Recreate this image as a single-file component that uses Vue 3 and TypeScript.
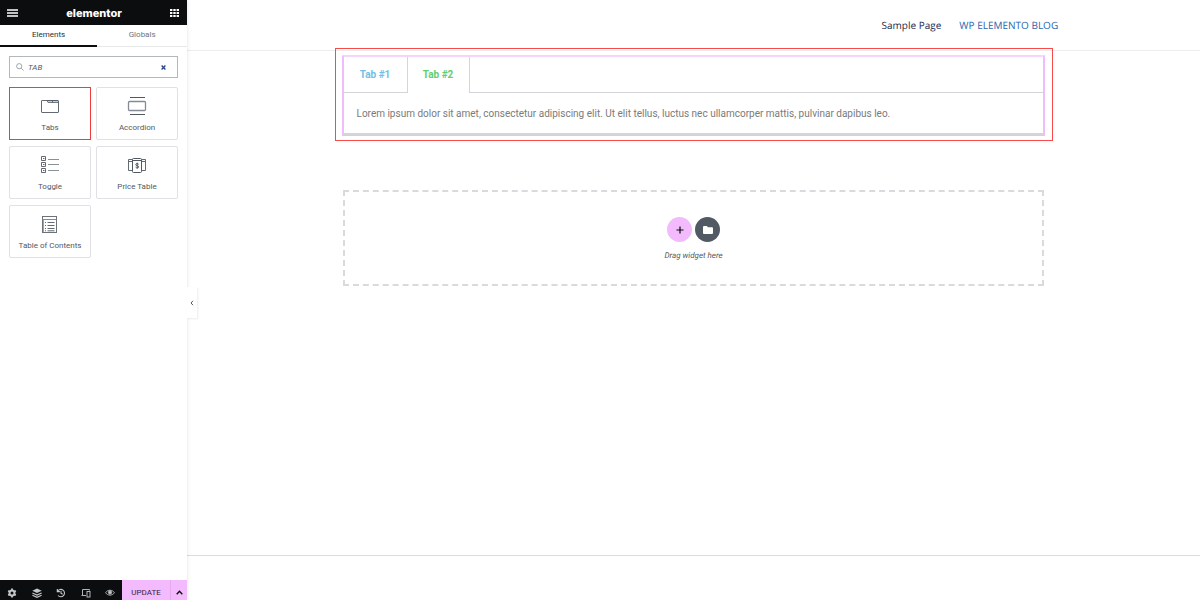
<script setup lang="ts">
import { ref } from 'vue'

interface Widget {
  name: string
  icon: string
  selected?: boolean
}

const query = ref('TAB')
const activeTab = ref(1)
const tabs = ['Tab #1', 'Tab #2']
const widgets: Widget[] = [
  { name: 'Tabs', icon: 'tabs', selected: true },
  { name: 'Accordion', icon: 'accordion' },
  { name: 'Toggle', icon: 'toggle' },
  { name: 'Price Table', icon: 'price' },
  { name: 'Table of Contents', icon: 'toc' },
]
</script>

<template>
  <div class="editor">
    <aside class="panel">
      <header class="panel-head">
        <button class="bare" aria-label="Menu">
          <svg width="11" height="8" viewBox="0 0 11 8"><path d="M0 1h11M0 4h11M0 7h11" stroke="#fff" stroke-width="1.5" /></svg>
        </button>
        <span class="brand">elementor</span>
        <button class="bare" aria-label="Widgets">
          <svg width="9" height="8" viewBox="0 0 9 8"><path d="M0 1h9M0 4h9M0 7h9" stroke="#fff" stroke-width="2" stroke-dasharray="2.4 .9" /></svg>
        </button>
      </header>
      <nav class="panel-tabs">
        <button class="panel-tab current">Elements</button>
        <button class="panel-tab">Globals</button>
      </nav>
      <div class="search">
        <svg width="8" height="8" viewBox="0 0 8 8" fill="none" stroke="#8a8f96" stroke-width=".8"><circle cx="3.2" cy="3.2" r="2.6" /><path d="M5.1 5.1 7.6 7.6" /></svg>
        <input v-model="query" class="search-input" type="text" aria-label="Search widget" />
        <button class="bare" aria-label="Clear search" @click="query = ''">
          <svg width="5" height="5" viewBox="0 0 5 5"><path d="M.6.6 4.4 4.4M4.4.6.6 4.4" stroke="#2a4788" stroke-width="1.4" /></svg>
        </button>
      </div>
      <div class="widgets">
        <button v-for="w in widgets" :key="w.name" class="widget" :class="{ selected: w.selected }">
          <svg class="widget-icon" width="20" height="20" viewBox="0 0 20 20" fill="none" stroke="#515962">
            <template v-if="w.icon === 'tabs'">
              <rect x="1.5" y="4.500" width="17" height="12" rx=".5" stroke-width=".9" />
              <path d="M7 4.500l1 2h10.500M12.500 4.500v2" stroke-width=".8" />
              <path d="M8 4.800h10" />
            </template>
            <template v-else-if="w.icon === 'accordion'">
              <path d="M3 1.500h15M3 18.500h15" />
              <rect x="1.500" y="5.500" width="17" height="9" rx="1" stroke="#858b94" stroke-width="1.300" />
            </template>
            <template v-else-if="w.icon === 'toggle'">
              <path d="M1.500 1.500h4v4h-4zM1.500 7.500h4v4h-4zM1.500 13.500h4v4h-4zM3 3.500h1.500M3 9.500h1.500M3 15.500h1.500" stroke-width=".9" />
              <path d="M8 4.500h11M8 9.500h11M8 15.500h11" stroke="#7c838b" stroke-width=".9" />
            </template>
            <template v-else-if="w.icon === 'price'">
              <path d="M5.500 4.500h-4v11h4M14.500 4.500h4v11h-4M2 6.500h3M15 6.500h3" stroke-width=".9" />
              <rect x="5.500" y="3.500" width="9" height="14" rx="1" />
              <path d="M6 5.500h8M11.700 9.300c-.5-1-3-1-3 .3 0 1.500 3 .8 3 2.300 0 1.300-2.500 1.300-3.100.2M10.200 7.700v6" stroke-width="1" />
            </template>
            <template v-else>
              <rect x="2.500" y="2.500" width="14" height="16" stroke="#6b727a" />
              <path d="M2.500 5.500h14" stroke="#858b94" />
              <path d="M3.500 6v12" stroke="#c49a78" />
              <path d="M7.500 8.500h7M7.500 11.500h7M7.500 14.500h7M5 8.500h1M5 11.500h1M5 14.500h1M5 16.800h1M7.500 16.800h7" stroke-width=".9" />
            </template>
          </svg>
          <span>{{ w.name }}</span>
        </button>
      </div>
      <footer class="panel-foot">
        <div class="tools">
          <button class="bare" aria-label="Settings">
            <svg width="10" height="10" viewBox="0 0 10 10"><circle cx="5" cy="5" r="2.500" fill="none" stroke="#c3c8cd" stroke-width="2" /><path d="M5 .6v1.800M5 7.600v1.800M1.200 2.800l1.500.9M7.300 6.300l1.500.9M1.200 7.200l1.500-.9M7.300 3.700l1.500-.9" stroke="#c3c8cd" stroke-width="1.800" /></svg>
          </button>
          <button class="bare" aria-label="Navigator">
            <svg width="10" height="10" viewBox="0 0 10 10"><path d="M5 .5 9.700 2.700 5 4.900.3 2.700z" fill="#c3c8cd" /><path d="M.4 5 5 7.100 9.600 5M.4 7.200 5 9.300 9.600 7.200" fill="none" stroke="#c3c8cd" stroke-width="1.100" /></svg>
          </button>
          <button class="bare" aria-label="History">
            <svg width="10" height="10" viewBox="0 0 10 10" fill="none" stroke="#c3c8cd" stroke-width="1.100"><path d="M1.600 3.200A3.700 3.700 0 1 1 2 7.500M1.300 1v2.600h2.600M5 3v2.300l1.600 1" /></svg>
          </button>
          <button class="bare" aria-label="Responsive mode">
            <svg width="10" height="10" viewBox="0 0 10 10" fill="none" stroke="#aeb4ba"><path d="M8.500 2.500v-1H1.500v6M.5 7.500H5" /><rect x="6" y="3.500" width="3" height="5.500" /></svg>
          </button>
          <button class="bare" aria-label="Preview">
            <svg width="10" height="10" viewBox="0 0 10 10" fill="none" stroke="#aeb4ba"><path d="M.6 4.700C2.600 1.400 7.400 1.400 9.400 4.700 7.400 7.900 2.600 7.900.6 4.700z" /><circle cx="5" cy="4.400" r="1.600" fill="#c3c8cd" /></svg>
          </button>
        </div>
        <button class="update">UPDATE</button>
        <button class="update-more" aria-label="Save options">
          <svg width="7" height="5" viewBox="0 0 7 5"><path d="M.7 4.200 3.500 1.200 6.300 4.200" fill="none" stroke="#0c0d0e" stroke-width="1.300" /></svg>
        </button>
      </footer>
      <button class="collapse" aria-label="Hide panel">
        <svg width="4" height="6" viewBox="0 0 4 6"><path d="M3 .8 1 3 3 5.200" fill="none" stroke="#515962" /></svg>
      </button>
    </aside>

    <main class="preview">
      <header class="site-head">
        <nav class="site-nav">
          <a href="#" class="dark">Sample Page</a>
          <a href="#">WP ELEMENTO BLOG</a>
        </nav>
      </header>
      <section class="highlight">
        <div class="tabs-widget">
          <div class="tab-row" role="tablist">
            <button
              v-for="(t, i) in tabs"
              :key="t"
              class="tab"
              :class="{ active: i === activeTab }"
              role="tab"
              :aria-selected="i === activeTab"
              @click="activeTab = i"
            >{{ t }}</button>
            <span class="tab-rest"></span>
          </div>
          <p class="tab-body" role="tabpanel">Lorem ipsum dolor sit amet, consectetur adipiscing elit. Ut elit tellus, luctus nec ullamcorper mattis, pulvinar dapibus leo.</p>
        </div>
      </section>
      <section class="dropzone">
        <div class="drop-actions">
          <button class="round add" aria-label="Add section">
            <svg width="8" height="8" viewBox="0 0 8 8"><path d="M4 .5v7M.5 4h7" stroke="#0c0d0e" stroke-width="1.200" /></svg>
          </button>
          <button class="round folder" aria-label="Add template">
            <svg width="10" height="8" viewBox="0 0 10 8"><path d="M0 1Q0 0 1 0h2.800l1.200 1.200h4q1 0 1 1v4.800q0 1-1 1h-8q-1 0-1-1z" fill="#fff" /></svg>
          </button>
        </div>
        <p class="drop-text">Drag widget here</p>
      </section>
      <footer class="site-foot"></footer>
    </main>
  </div>
</template>

<style>
body {
  margin: 0;
  background: #fff;
}
</style>

<style scoped>
.editor {
  display: flex;
  min-height: 100vh;
  font-family: Roboto, "Liberation Sans", sans-serif;
}
button {
  margin: 0;
  padding: 0;
  border: 0;
  background: none;
  font: inherit;
  color: inherit;
  cursor: pointer;
}
svg {
  display: block;
}
.bare {
  display: flex;
}
.panel {
  position: relative;
  z-index: 1;
  display: flex;
  flex-direction: column;
  flex: 0 0 187px;
  background: #fff;
  box-shadow: 0 0 4px rgba(0, 0, 0, 0.12);
  font-size: 8px;
  color: #515962;
  text-rendering: geometricPrecision;
}
.panel-head {
  display: flex;
  align-items: center;
  justify-content: space-between;
  height: 25px;
  padding: 0 8px 0 7px;
  background: #0c0d0e;
}
.brand {
  font-family: Inter, sans-serif;
  font-size: 11px;
  font-weight: 800;
  line-height: 24px;
  color: #fff;
}
.panel-tabs {
  display: grid;
  grid-template-columns: 52% 48%;
  height: 22px;
}
.panel-tab {
  padding-bottom: 2px;
  border-bottom: 1px solid #e6e8ea;
  color: #6d747c;
}
.panel-tab.current {
  border-bottom: 2px solid #0c0d0e;
  padding-bottom: 1px;
  color: #2c3036;
}
.search {
  display: flex;
  align-items: center;
  gap: 4px;
  height: 20px;
  margin: 9px;
  padding: 0 11px 0 6px;
  border: 1px solid #b4b7bb;
}
.search-input {
  flex: 1;
  min-width: 0;
  padding: 0;
  border: 0;
  outline: 0;
  background: none;
  font: italic 8px Roboto, sans-serif;
  color: #515962;
}
.widgets {
  display: grid;
  grid-template-columns: 1fr 1fr;
  gap: 6px 5px;
  padding: 0 9px;
}
.widget {
  display: flex;
  flex-direction: column;
  align-items: center;
  gap: 7px;
  height: 53px;
  padding-top: 8px;
  border: 1px solid #dfe1e4;
  border-radius: 2px;
  line-height: 10px;
}
.widget.selected {
  border-color: #f23c3c;
  border-radius: 0;
}
.panel-foot {
  display: flex;
  height: 20px;
  margin-top: auto;
  background: #0c0d0e;
}
.tools {
  display: flex;
  flex: 1;
  align-items: center;
  justify-content: space-between;
  padding: 5px 7px 0;
}
.update {
  width: 48px;
  padding-top: 4px;
  background: #f3bafd;
  color: #33253a;
}
.update-more {
  display: flex;
  align-items: center;
  justify-content: center;
  width: 17px;
  padding-top: 4px;
  border-left: 1px solid #e4abee;
  background: #f3bafd;
}
.collapse {
  position: absolute;
  top: calc(50% - 13px);
  left: 100%;
  display: flex;
  align-items: center;
  justify-content: center;
  width: 10px;
  height: 31px;
  background: #fff;
  box-shadow: 1px 1px 2px rgba(0, 0, 0, 0.08);
}
.preview {
  display: flex;
  flex: 1;
  flex-direction: column;
  align-items: center;
  min-width: 0;
}
.site-head {
  display: flex;
  justify-content: center;
  width: 100%;
  height: 50px;
  border-bottom: 1px solid #ededed;
}
.site-nav {
  display: flex;
  align-items: center;
  justify-content: flex-end;
  gap: 18px;
  width: 72%;
  font-family: "Open Sans", "Noto Sans", sans-serif;
  font-size: 10px;
  text-rendering: geometricPrecision;
}
.site-nav a {
  color: #2a66ae;
  text-decoration: none;
}
.site-nav .dark {
  color: #1d2748;
}
.highlight {
  box-sizing: border-box;
  width: 100%;
  max-width: 718px;
  margin-top: -3px;
  padding: 6px 7px 4px 6px;
  border: 1px solid #f94a4a;
}
.tabs-widget {
  border: 2px solid #f0bcfb;
  border-top-color: #f6d5fd;
  border-bottom-width: 1px;
}
.tab-row {
  display: flex;
  height: 36px;
}
.tab {
  width: 63px;
  border-bottom: 1px solid #d3d5da;
  font-size: 10px;
  font-weight: 700;
  color: #6ec1e4;
}
.tab.active {
  padding-bottom: 1px;
  border: 1px solid #d3d5da;
  border-width: 0 1px;
  color: #61ce70;
}
.tab-rest {
  flex: 1;
  border-bottom: 1px solid #d3d5da;
}
.tab-body {
  margin: 0;
  padding: 13px 13px 12px;
  border-bottom: 2px solid #d3d5da;
  font-size: 10px;
  line-height: 15px;
  color: #7a7a7a;
}
.dropzone {
  display: flex;
  flex-direction: column;
  align-items: center;
  justify-content: center;
  gap: 9px;
  box-sizing: border-box;
  width: 100%;
  max-width: 701px;
  height: 96px;
  margin-top: 49px;
  padding-top: 2px;
  border: 2px dashed #d8dadd;
}
.drop-actions {
  display: flex;
  gap: 3px;
}
.round {
  display: flex;
  align-items: center;
  justify-content: center;
  width: 25px;
  height: 25px;
  border-radius: 50%;
}
.add {
  background: #f3bafd;
}
.folder {
  background: #515962;
}
.drop-text {
  margin: 0;
  font-size: 8px;
  font-style: italic;
  line-height: 10px;
  color: #515962;
  text-rendering: geometricPrecision;
}
.site-foot {
  width: 100%;
  height: 44px;
  margin-top: auto;
  border-top: 1px solid #dcdcdc;
}
</style>
